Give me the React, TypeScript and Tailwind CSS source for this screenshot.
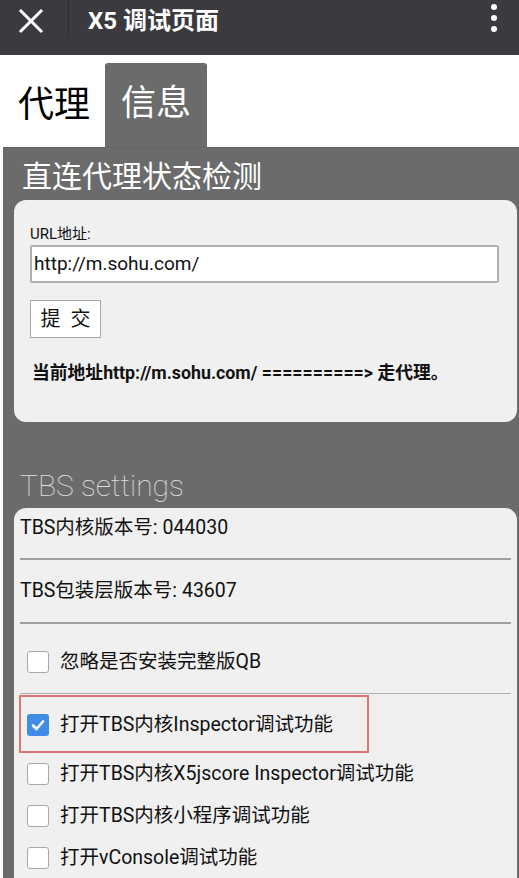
import React from "react";

const font = { fontFamily: 'Roboto, "Noto Sans CJK SC", sans-serif' };

function Box({ checked }: { checked?: boolean }) {
  if (checked) {
    return (
      <div className="w-[22px] h-[22px] rounded-[3px] bg-[#3f8de6] flex items-center justify-center shrink-0">
        <svg width="16" height="16" viewBox="0 0 16 16">
          <path d="M3 8.5 L6.5 12 L13 4.5" fill="none" stroke="white" strokeWidth="2.6" strokeLinecap="round" strokeLinejoin="round" />
        </svg>
      </div>
    );
  }
  return <div className="w-[22px] h-[22px] rounded-[3px] bg-white border border-[#a8a8a8] shrink-0" />;
}

function Row({ label, checked }: { label: string; checked?: boolean }) {
  return (
    <div className="flex items-center h-[42px] pl-[7px]">
      <Box checked={checked} />
      <span className="ml-[11px] text-[19.5px] text-[#111]">{label}</span>
    </div>
  );
}

export default function App() {
  return (
    <div className="w-[519px] h-[878px] overflow-hidden bg-white" style={font}>
      <div className="h-[55px] bg-[#3a3a3f] flex items-center relative">
        <svg className="ml-[18px] mb-[14px]" width="26" height="26" viewBox="0 0 26 26">
          <path d="M3 3 L23 23 M23 3 L3 23" stroke="white" strokeWidth="3" strokeLinecap="square" />
        </svg>
        <div className="ml-[24px] w-px h-[38px] self-start bg-[#2e2e32]" />
        <div className="ml-[19px] text-white text-[24px] font-bold leading-none pb-[14px]">X5 调试页面</div>
        <div className="ml-auto mr-[22px] flex flex-col gap-[5px] pb-[20px]">
          <div className="w-[6px] h-[6px] rounded-full bg-white" />
          <div className="w-[6px] h-[6px] rounded-full bg-white" />
          <div className="w-[6px] h-[6px] rounded-full bg-white" />
        </div>
      </div>
      <div className="h-[92px] flex items-end">
        <div className="w-[105px] h-[84px] flex items-center pl-[18px] text-[36px] text-black">代理</div>
        <div className="w-[102px] h-[84px] rounded-t-[3px] bg-[#6b6b6b] flex items-center justify-center text-[35px] text-white pb-[2px]">信息</div>
      </div>
      <div className="ml-[3px] bg-[#6b6b6b] h-[731px] border-t border-[#646464]">
        <div className="pl-[19px] pt-[9px] h-[52px] text-[30px] text-white leading-[40px]">直连代理状态检测</div>
        <div className="ml-[11px] mr-[2px] bg-[#f0f0f0] rounded-[12px] h-[222px] pl-[16px] pr-[18px] pt-[25px]">
          <div className="text-[15px] text-[#111] leading-[18px]">URL地址:</div>
          <div className="mt-[2px] h-[38px] bg-white border-2 border-[#b0b0b0] rounded-[2px] flex items-center pl-[2px] text-[19px] text-[#111]">http://m.sohu.com/</div>
          <div className="mt-[17px] w-[71px] h-[38px] bg-white border border-[#a8a8a8] flex items-center justify-center text-[20px] text-[#111]">提&nbsp;&nbsp;交</div>
          <div className="mt-[22px] pl-[2px] text-[17.8px] font-bold text-[#111]">当前地址http://m.sohu.com/ ==========&gt; 走代理。</div>
        </div>
        <div className="pl-[17px] pt-[44px] h-[86px] text-[30px] text-[#e0e0e0] font-thin leading-[40px]">TBS settings</div>
        <div className="ml-[11px] mr-[2px] bg-[#f0f0f0] rounded-t-[12px] px-[6px] h-[400px]">
          <div className="h-[50px] flex items-center pb-[10px] text-[19.5px] text-[#111]">TBS内核版本号: 044030</div>
          <div className="h-[2px] bg-[#a0a0a0]" />
          <div className="h-[62px] flex items-center text-[19.5px] text-[#111]">TBS包装层版本号: 43607</div>
          <div className="h-[2px] bg-[#a0a0a0]" />
          <div className="h-[69px] flex items-center pl-[7px] pt-[6px]">
            <Box />
            <span className="ml-[11px] text-[19.5px] text-[#111]">忽略是否安装完整版QB</span>
          </div>
          <div className="h-px bg-[#b0b0b0]" />
          <div className="w-[350px] -ml-[1px] mt-[1px] h-[58px] border-2 border-[#e07575] flex items-center pl-[6px] pt-[1px]">
            <Box checked />
            <span className="ml-[11px] text-[19.5px] text-[#111]">打开TBS内核Inspector调试功能</span>
          </div>
          <Row label="打开TBS内核X5jscore Inspector调试功能" />
          <Row label="打开TBS内核小程序调试功能" />
          <Row label="打开vConsole调试功能" />
        </div>
      </div>
    </div>
  );
}
